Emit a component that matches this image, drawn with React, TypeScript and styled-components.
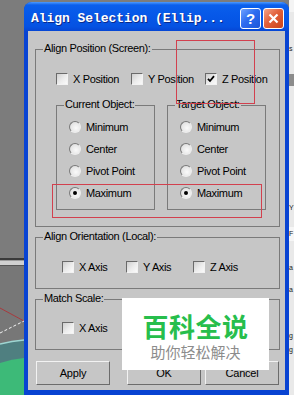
import React from 'react';
import styled, {createGlobalStyle, css} from 'styled-components';

const Global = createGlobalStyle`
  html, body {
    margin: 0;
    padding: 0;
    background: #7c7c7c;
    overflow: hidden;
  }
`;

const FACE = '#c6c6c6';

const Page = styled.div`
  display: flex;
  width: 294px;
  height: 395px;
  overflow: hidden;
`;

const LeftStrip = styled.div`
  width: 24px;
  flex: none;
  display: flex;
  flex-direction: column;
`;

const DesktopTop = styled.div`
  height: 257px;
  background: #7c7c7c;
`;

const RightStrip = styled.div`
  width: 5px;
  flex: none;
  background: #e9e9e9;
  display: flex;
  flex-direction: column;
  overflow: hidden;
  font-family: 'Liberation Sans', Arial, sans-serif;
  font-size: 7px;
  color: #222;
`;

const StripBar = styled.div<{$h: number; $bg: string; $mt: number}>`
  height: ${(p) => p.$h}px;
  margin-top: ${(p) => p.$mt}px;
  background: ${(p) => p.$bg};
  line-height: ${(p) => p.$h}px;
  white-space: nowrap;
`;

const Win = styled.div`
  width: 265px;
  height: 393px;
  margin-top: 2px;
  flex: none;
  display: flex;
  flex-direction: column;
  border-radius: 8px 8px 0 0;
  background: #0843d2;
  overflow: hidden;
`;

const TitleBar = styled.div`
  height: 29px;
  flex: none;
  box-sizing: border-box;
  padding: 3px 5px 0 7px;
  display: flex;
  align-items: center;
  background: linear-gradient(
    to bottom,
    #4d9bff 0px,
    #0a5fec 3px,
    #0658e8 45%,
    #0552e2 85%,
    #0646d4 100%
  );
`;

const Title = styled.div`
  flex: 1;
  font-family: 'Liberation Mono', 'Courier New', monospace;
  font-weight: bold;
  font-size: 13px;
  color: #fff;
  text-shadow: 1px 1px 0 #0b2a8c;
  white-space: nowrap;
  letter-spacing: -0.05px;
`;

const CapBtn = styled.div<{$kind: 'help' | 'close'}>`
  width: 19px;
  height: 19px;
  border: 1px solid #fff;
  border-radius: 3px;
  display: flex;
  align-items: center;
  justify-content: center;
  font-family: 'Liberation Sans', Arial, sans-serif;
  font-weight: bold;
  font-size: 15px;
  color: #fff;
  ${(p) =>
    p.$kind === 'help'
      ? css`
          background: linear-gradient(135deg, #6ea3ff 0%, #2d6cf0 45%, #1d55d8 100%);
        `
      : css`
          margin-left: 2px;
          background: linear-gradient(135deg, #f3a48a 0%, #e2603a 45%, #c9441c 100%);
        `}
`;

const Body = styled.div`
  flex: 1;
  display: flex;
  padding: 0 4px 5px 4px;
`;

const Client = styled.div`
  position: relative;
  flex: 1;
  background: ${FACE};
  padding: 18px 5px 0 7px;
  font-family: 'Liberation Sans', Arial, sans-serif;
  font-size: 11px;
  letter-spacing: -0.35px;
  color: #000;
`;

const Group = styled.div<{$mt: number}>`
  position: relative;
  margin-top: ${(p) => p.$mt}px;
  border: 1px solid #7a7a7a;
`;

const GroupLabel = styled.span`
  position: absolute;
  top: -8px;
  left: 7px;
  padding: 0 1px;
  line-height: 13px;
  background: ${FACE};
  white-space: nowrap;
`;

const CheckRow = styled.div<{$cols: string; $mt: number; $ml: number; $mb: number}>`
  display: grid;
  grid-template-columns: ${(p) => p.$cols};
  margin: ${(p) => p.$mt}px 0 ${(p) => p.$mb}px ${(p) => p.$ml}px;
  height: 12px;
`;

const CheckItem = styled.label`
  display: flex;
  align-items: center;
  gap: 5px;
  height: 12px;
  line-height: 12px;
  white-space: nowrap;
`;

const Box = styled.span`
  width: 10px;
  height: 10px;
  flex: none;
  border: 1px solid;
  border-color: #6a6a6a #f2f2f2 #f2f2f2 #6a6a6a;
  background: linear-gradient(135deg, #cfcfcf 0%, #ececec 55%, #fafafa 100%);
  display: flex;
  align-items: center;
  justify-content: center;
`;

const SubRow = styled.div`
  display: flex;
  gap: 12px;
  margin: 20px 0 16px 20px;
`;

const SubGroup = styled.div`
  position: relative;
  width: 99px;
  height: 105px;
  box-sizing: border-box;
  border: 1px solid #7a7a7a;
`;

const RadioList = styled.div`
  display: flex;
  flex-direction: column;
  gap: 10px;
  padding: 15px 0 0 12px;
`;

const RadioItem = styled.label`
  display: flex;
  align-items: center;
  gap: 5px;
  height: 12px;
  line-height: 12px;
  white-space: nowrap;
`;

const Dot = styled.span<{$on: boolean}>`
  position: relative;
  width: 10px;
  height: 10px;
  flex: none;
  border-radius: 50%;
  border: 1px solid;
  border-color: #7a7a7a #eeeeee #eeeeee #7a7a7a;
  background: radial-gradient(circle at 60% 60%, #fafafa 0%, #e6e6e6 60%, #cfcfcf 100%);
  ${(p) =>
    p.$on &&
    css`
      &::after {
        content: '';
        position: absolute;
        left: 3px;
        top: 3px;
        width: 4px;
        height: 4px;
        border-radius: 50%;
        background: #000;
      }
    `}
`;

const ButtonRow = styled.div`
  display: flex;
  margin: 11px 0 0 1px;
`;

const Btn = styled.div<{$mr: number}>`
  width: 74px;
  height: 24px;
  box-sizing: border-box;
  margin-right: ${(p) => p.$mr}px;
  border: 1px solid;
  border-color: #f2f2f2 #6c6c6c #6c6c6c #f2f2f2;
  background: ${FACE};
  display: flex;
  align-items: center;
  justify-content: center;
  letter-spacing: -0.2px;
`;

const Mark = styled.div<{$l: number; $t: number; $w: number; $h: number}>`
  position: absolute;
  left: ${(p) => p.$l}px;
  top: ${(p) => p.$t}px;
  width: ${(p) => p.$w}px;
  height: ${(p) => p.$h}px;
  box-sizing: border-box;
  border: 1px solid #d2404e;
  pointer-events: none;
`;

const Watermark = styled.div`
  position: absolute;
  left: 94px;
  top: 267px;
  width: 147px;
  height: 72px;
  background: #fff;
  display: flex;
  flex-direction: column;
  align-items: center;
  padding-top: 13px;
  box-sizing: border-box;
  font-family: 'Noto Sans CJK SC', 'Noto Sans', sans-serif;
  letter-spacing: 0;
`;

const WmMain = styled.div`
  font-size: 26px;
  line-height: 30px;
  font-weight: bold;
  color: #27be4c;
  letter-spacing: 0.5px;
`;

const WmSub = styled.div`
  font-size: 15px;
  line-height: 18px;
  margin-top: 2px;
  color: #8c8c8c;
`;

const Check = ({on}: {on?: boolean}) => (
  <Box>
    {on && (
      <svg width="8" height="8" viewBox="0 0 8 8">
        <path d="M1 3.8 L3 6 L7 1.2" fill="none" stroke="#000" strokeWidth="1.8" />
      </svg>
    )}
  </Box>
);

const Viewport = () => (
  <svg width="24" height="138" viewBox="0 0 24 138" style={{display: 'block'}}>
    <rect x="0" y="0" width="24" height="138" fill="#777777" />
    <rect x="0" y="0" width="24" height="1" fill="#7c7c7c" />
    <rect x="0" y="1" width="24" height="2" fill="#3a3a3a" />
    <rect x="0" y="3" width="24" height="1" fill="#9c9c9c" />
    <rect x="0" y="4" width="24" height="4" fill="#d0d0d0" />
    <rect x="0" y="8" width="24" height="1" fill="#555" />
    <path d="M0 51 L24 64" stroke="#a83a3e" strokeWidth="1" />
    <path d="M0 76 L24 64" stroke="#f4f4f4" strokeWidth="1" strokeDasharray="3 2" />
    <path d="M0 87 Q12 84 24 83 L24 138 L0 138 Z" fill="#4f7f80" />
    <path d="M0 87 Q12 84 24 83" stroke="#9fd6d2" strokeWidth="1.5" fill="none" />
    <path d="M0 106 Q12 102 24 101 L24 138 L0 138 Z" fill="#3dba78" />
  </svg>
);

const App: React.FC = () => {
  return (
    <Page>
      <Global />
      <LeftStrip>
        <DesktopTop />
        <Viewport />
      </LeftStrip>

      <Win>
        <TitleBar>
          <Title>Align Selection (Ellip...</Title>
          <CapBtn $kind="help">?</CapBtn>
          <CapBtn $kind="close">
            <svg width="11" height="11" viewBox="0 0 11 11">
              <path d="M1.5 1.5 L9.5 9.5 M9.5 1.5 L1.5 9.5" stroke="#fff" strokeWidth="2.2" />
            </svg>
          </CapBtn>
        </TitleBar>

        <Body>
          <Client>
            <Group $mt={0}>
              <GroupLabel>Align Position (Screen):</GroupLabel>
              <CheckRow $cols="75px 74px auto" $mt={23} $ml={20} $mb={0}>
                <CheckItem><Check />X Position</CheckItem>
                <CheckItem><Check />Y Position</CheckItem>
                <CheckItem><Check on />Z Position</CheckItem>
              </CheckRow>
              <SubRow>
                <SubGroup>
                  <GroupLabel>Current Object:</GroupLabel>
                  <RadioList>
                    <RadioItem><Dot $on={false} />Minimum</RadioItem>
                    <RadioItem><Dot $on={false} />Center</RadioItem>
                    <RadioItem><Dot $on={false} />Pivot Point</RadioItem>
                    <RadioItem><Dot $on />Maximum</RadioItem>
                  </RadioList>
                </SubGroup>
                <SubGroup>
                  <GroupLabel>Target Object:</GroupLabel>
                  <RadioList>
                    <RadioItem><Dot $on={false} />Minimum</RadioItem>
                    <RadioItem><Dot $on={false} />Center</RadioItem>
                    <RadioItem><Dot $on={false} />Pivot Point</RadioItem>
                    <RadioItem><Dot $on />Maximum</RadioItem>
                  </RadioList>
                </SubGroup>
              </SubRow>
            </Group>

            <Group $mt={10}>
              <GroupLabel>Align Orientation (Local):</GroupLabel>
              <CheckRow $cols="64px 67px auto" $mt={23} $ml={26} $mb={15}>
                <CheckItem><Check />X Axis</CheckItem>
                <CheckItem><Check />Y Axis</CheckItem>
                <CheckItem><Check />Z Axis</CheckItem>
              </CheckRow>
            </Group>

            <Group $mt={10}>
              <GroupLabel>Match Scale:</GroupLabel>
              <CheckRow $cols="64px 67px auto" $mt={22} $ml={26} $mb={15}>
                <CheckItem><Check />X Axis</CheckItem>
              </CheckRow>
            </Group>

            <ButtonRow>
              <Btn $mr={17}>Apply</Btn>
              <Btn $mr={4}>OK</Btn>
              <Btn $mr={0}>Cancel</Btn>
            </ButtonRow>

            <Mark $l={148} $t={9} $w={79} $h={64} />
            <Mark $l={24} $t={153} $w={210} $h={34} />

            <Watermark>
              <WmMain>百科全说</WmMain>
              <WmSub>助你轻松解决</WmSub>
            </Watermark>
          </Client>
        </Body>
      </Win>

      <RightStrip>
        <StripBar $h={12} $bg="#f4f4f4" $mt={0} />
        <StripBar $h={14} $bg="#e9e9e9" $mt={30}>s</StripBar>
        <StripBar $h={12} $bg="#8c8c8c" $mt={18} />
        <StripBar $h={14} $bg="#e9e9e9" $mt={115}>Y</StripBar>
        <StripBar $h={14} $bg="#f6f6f6" $mt={12}>F</StripBar>
        <StripBar $h={14} $bg="#e9e9e9" $mt={20}>a</StripBar>
        <StripBar $h={14} $bg="#e9e9e9" $mt={8}>a</StripBar>
        <StripBar $h={14} $bg="#e9e9e9" $mt={32}>g</StripBar>
        <StripBar $h={14} $bg="#e9e9e9" $mt={0}>g</StripBar>
      </RightStrip>
    </Page>
  );
};

export default App;
